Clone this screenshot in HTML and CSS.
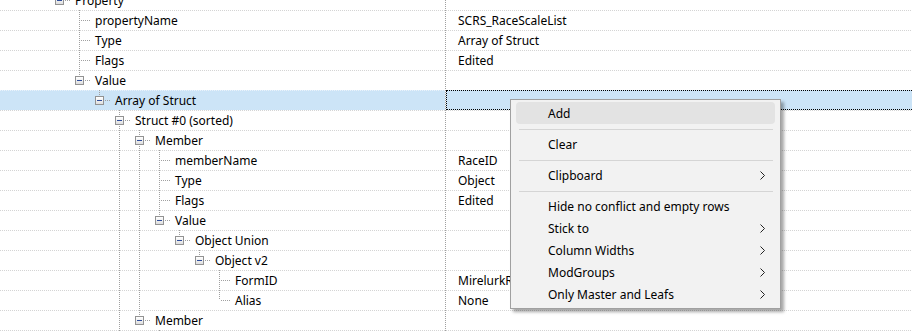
FILE: index.html
```html
<!DOCTYPE html>
<html lang="en">
<head>
    <meta charset="UTF-8">
    <title>Record View</title>
    <link rel="stylesheet" href="styles.css">
</head>
<body>
    <div class="tree">
        <div class="row">
            <div class="name"><span class="s l"><b class="box"></b></span><span class="label">Property</span></div>
            <div class="sep"></div><div class="val"></div>
        </div>
        <div class="row">
            <div class="name"><span class="s"></span><span class="s t"></span><span class="label">propertyName</span></div>
            <div class="sep"></div><div class="val">SCRS_RaceScaleList</div>
        </div>
        <div class="row">
            <div class="name"><span class="s"></span><span class="s t"></span><span class="label">Type</span></div>
            <div class="sep"></div><div class="val">Array of Struct</div>
        </div>
        <div class="row">
            <div class="name"><span class="s"></span><span class="s t"></span><span class="label">Flags</span></div>
            <div class="sep"></div><div class="val">Edited</div>
        </div>
        <div class="row">
            <div class="name"><span class="s"></span><span class="s l"><b class="box"></b></span><span class="label">Value</span></div>
            <div class="sep"></div><div class="val"></div>
        </div>
        <div class="row sel">
            <div class="name"><span class="s"></span><span class="s"></span><span class="s l"><b class="box"></b></span><span class="label">Array of Struct</span></div>
            <div class="sep"></div><div class="val"></div>
        </div>
        <div class="row">
            <div class="name"><span class="s"></span><span class="s"></span><span class="s"></span><span class="s t"><b class="box"></b></span><span class="label">Struct #0 (sorted)</span></div>
            <div class="sep"></div><div class="val"></div>
        </div>
        <div class="row">
            <div class="name"><span class="s"></span><span class="s"></span><span class="s"></span><span class="s v"></span><span class="s t"><b class="box"></b></span><span class="label">Member</span></div>
            <div class="sep"></div><div class="val"></div>
        </div>
        <div class="row">
            <div class="name"><span class="s"></span><span class="s"></span><span class="s"></span><span class="s v"></span><span class="s v"></span><span class="s t"></span><span class="label">memberName</span></div>
            <div class="sep"></div><div class="val">RaceID</div>
        </div>
        <div class="row">
            <div class="name"><span class="s"></span><span class="s"></span><span class="s"></span><span class="s v"></span><span class="s v"></span><span class="s t"></span><span class="label">Type</span></div>
            <div class="sep"></div><div class="val">Object</div>
        </div>
        <div class="row">
            <div class="name"><span class="s"></span><span class="s"></span><span class="s"></span><span class="s v"></span><span class="s v"></span><span class="s t"></span><span class="label">Flags</span></div>
            <div class="sep"></div><div class="val">Edited</div>
        </div>
        <div class="row">
            <div class="name"><span class="s"></span><span class="s"></span><span class="s"></span><span class="s v"></span><span class="s v"></span><span class="s l"><b class="box"></b></span><span class="label">Value</span></div>
            <div class="sep"></div><div class="val"></div>
        </div>
        <div class="row">
            <div class="name"><span class="s"></span><span class="s"></span><span class="s"></span><span class="s v"></span><span class="s v"></span><span class="s"></span><span class="s l"><b class="box"></b></span><span class="label">Object Union</span></div>
            <div class="sep"></div><div class="val"></div>
        </div>
        <div class="row">
            <div class="name"><span class="s"></span><span class="s"></span><span class="s"></span><span class="s v"></span><span class="s v"></span><span class="s"></span><span class="s"></span><span class="s l"><b class="box"></b></span><span class="label">Object v2</span></div>
            <div class="sep"></div><div class="val"></div>
        </div>
        <div class="row">
            <div class="name"><span class="s"></span><span class="s"></span><span class="s"></span><span class="s v"></span><span class="s v"></span><span class="s"></span><span class="s"></span><span class="s"></span><span class="s t"></span><span class="label">FormID</span></div>
            <div class="sep"></div><div class="val">MirelurkRace "Mirelurk Race" [RACE:0002F845]</div>
        </div>
        <div class="row">
            <div class="name"><span class="s"></span><span class="s"></span><span class="s"></span><span class="s v"></span><span class="s v"></span><span class="s"></span><span class="s"></span><span class="s"></span><span class="s l"></span><span class="label">Alias</span></div>
            <div class="sep"></div><div class="val">None</div>
        </div>
        <div class="row">
            <div class="name"><span class="s"></span><span class="s"></span><span class="s"></span><span class="s v"></span><span class="s l"><b class="box"></b></span><span class="label">Member</span></div>
            <div class="sep"></div><div class="val"></div>
        </div>
        <div class="row">
            <div class="name"><span class="s"></span><span class="s"></span><span class="s"></span><span class="s v"></span><span class="s"></span><span class="s t"></span><span class="label">memberName</span></div>
            <div class="sep"></div><div class="val">Scale</div>
        </div>
    </div>

    <div class="menu">
        <div class="mi hot"><span>Add</span></div>
        <div class="msep"></div>
        <div class="mi"><span>Clear</span></div>
        <div class="msep"></div>
        <div class="mi"><span>Clipboard</span><svg class="chev" width="6" height="9" viewBox="0 0 6 9"><polyline points="0.5,0.5 4.5,4.5 0.5,8.5" fill="none" stroke="#222" stroke-width="1"/></svg></div>
        <div class="msep"></div>
        <div class="mi"><span>Hide no conflict and empty rows</span></div>
        <div class="mi"><span>Stick to</span><svg class="chev" width="6" height="9" viewBox="0 0 6 9"><polyline points="0.5,0.5 4.5,4.5 0.5,8.5" fill="none" stroke="#222" stroke-width="1"/></svg></div>
        <div class="mi"><span>Column Widths</span><svg class="chev" width="6" height="9" viewBox="0 0 6 9"><polyline points="0.5,0.5 4.5,4.5 0.5,8.5" fill="none" stroke="#222" stroke-width="1"/></svg></div>
        <div class="mi"><span>ModGroups</span><svg class="chev" width="6" height="9" viewBox="0 0 6 9"><polyline points="0.5,0.5 4.5,4.5 0.5,8.5" fill="none" stroke="#222" stroke-width="1"/></svg></div>
        <div class="mi"><span>Only Master and Leafs</span><svg class="chev" width="6" height="9" viewBox="0 0 6 9"><polyline points="0.5,0.5 4.5,4.5 0.5,8.5" fill="none" stroke="#222" stroke-width="1"/></svg></div>
    </div>
</body>
</html>
```

FILE: styles.css
```css
body { margin: 0; overflow: hidden; background: #fff; color: #000; font-family: "Noto Sans", "Open Sans", sans-serif; font-size: 12px; }

.tree { width: 960px; margin-top: -10px; }
.row {
    display: flex;
    height: 20px;
    line-height: 22px;
    background: repeating-linear-gradient(to right, #d4d4d4 0 1px, transparent 1px 2px) 0 0 / 100% 1px no-repeat;
}
.name { width: 445px; flex: none; display: flex; padding-left: 50px; box-sizing: border-box; white-space: nowrap; }
.sep { width: 1px; flex: none; background: repeating-linear-gradient(to bottom, #a0a0a0 0 1px, transparent 1px 2px); }
.val { flex: 1; padding-left: 12px; white-space: nowrap; }
.label { margin-left: 5px; }

.row.sel .name {
    background: repeating-linear-gradient(to right, #eaf2fb 0 1px, transparent 1px 2px) 0 0 / 100% 1px no-repeat, #cce4f7;
}
.row.sel .val { background: #cce4f7; outline: 1px dotted #000; outline-offset: -1px; }

/* tree guide slots */
.s { width: 20px; height: 20px; flex: none; }
.s.v {
    background: repeating-linear-gradient(to bottom, #a0a0a0 0 1px, transparent 1px 2px) 9px 0 / 1px 20px no-repeat;
}
.s.t {
    background:
        repeating-linear-gradient(to bottom, #a0a0a0 0 1px, transparent 1px 2px) 9px 0 / 1px 20px no-repeat,
        repeating-linear-gradient(to right, #a0a0a0 0 1px, transparent 1px 2px) 11px 10px / 9px 1px no-repeat;
}
.s.l {
    background:
        repeating-linear-gradient(to bottom, #a0a0a0 0 1px, transparent 1px 2px) 9px 0 / 1px 10px no-repeat,
        repeating-linear-gradient(to right, #a0a0a0 0 1px, transparent 1px 2px) 11px 10px / 9px 1px no-repeat;
}
.box {
    display: block;
    width: 9px;
    height: 9px;
    box-sizing: border-box;
    margin: 6px 0 0 5px;
    border: 1px solid #929292;
    background:
        linear-gradient(#2d4c9c, #2d4c9c) 1px 3px / 5px 1px no-repeat,
        linear-gradient(#ffffff, #dedede);
}

/* context menu */
.menu {
    position: absolute;
    left: 510px;
    top: 99px;
    width: 271px;
    box-sizing: border-box;
    padding: 2px 0 3px;
    background: #f2f2f2;
    border: 1px solid #a0a0a0;
    box-shadow: 3px 3px 3px rgba(0, 0, 0, 0.35);
}
.mi {
    display: flex;
    justify-content: space-between;
    align-items: center;
    height: 22px;
    margin: 0 5px;
    padding: 0 9px 0 32px;
    border-radius: 4px;
    white-space: nowrap;
}
.mi.hot { background: #e3e3e3; }
.msep { height: 1px; margin: 5px 7px 3px 8px; background: #d5d5d5; }
.chev { display: block; }
```
